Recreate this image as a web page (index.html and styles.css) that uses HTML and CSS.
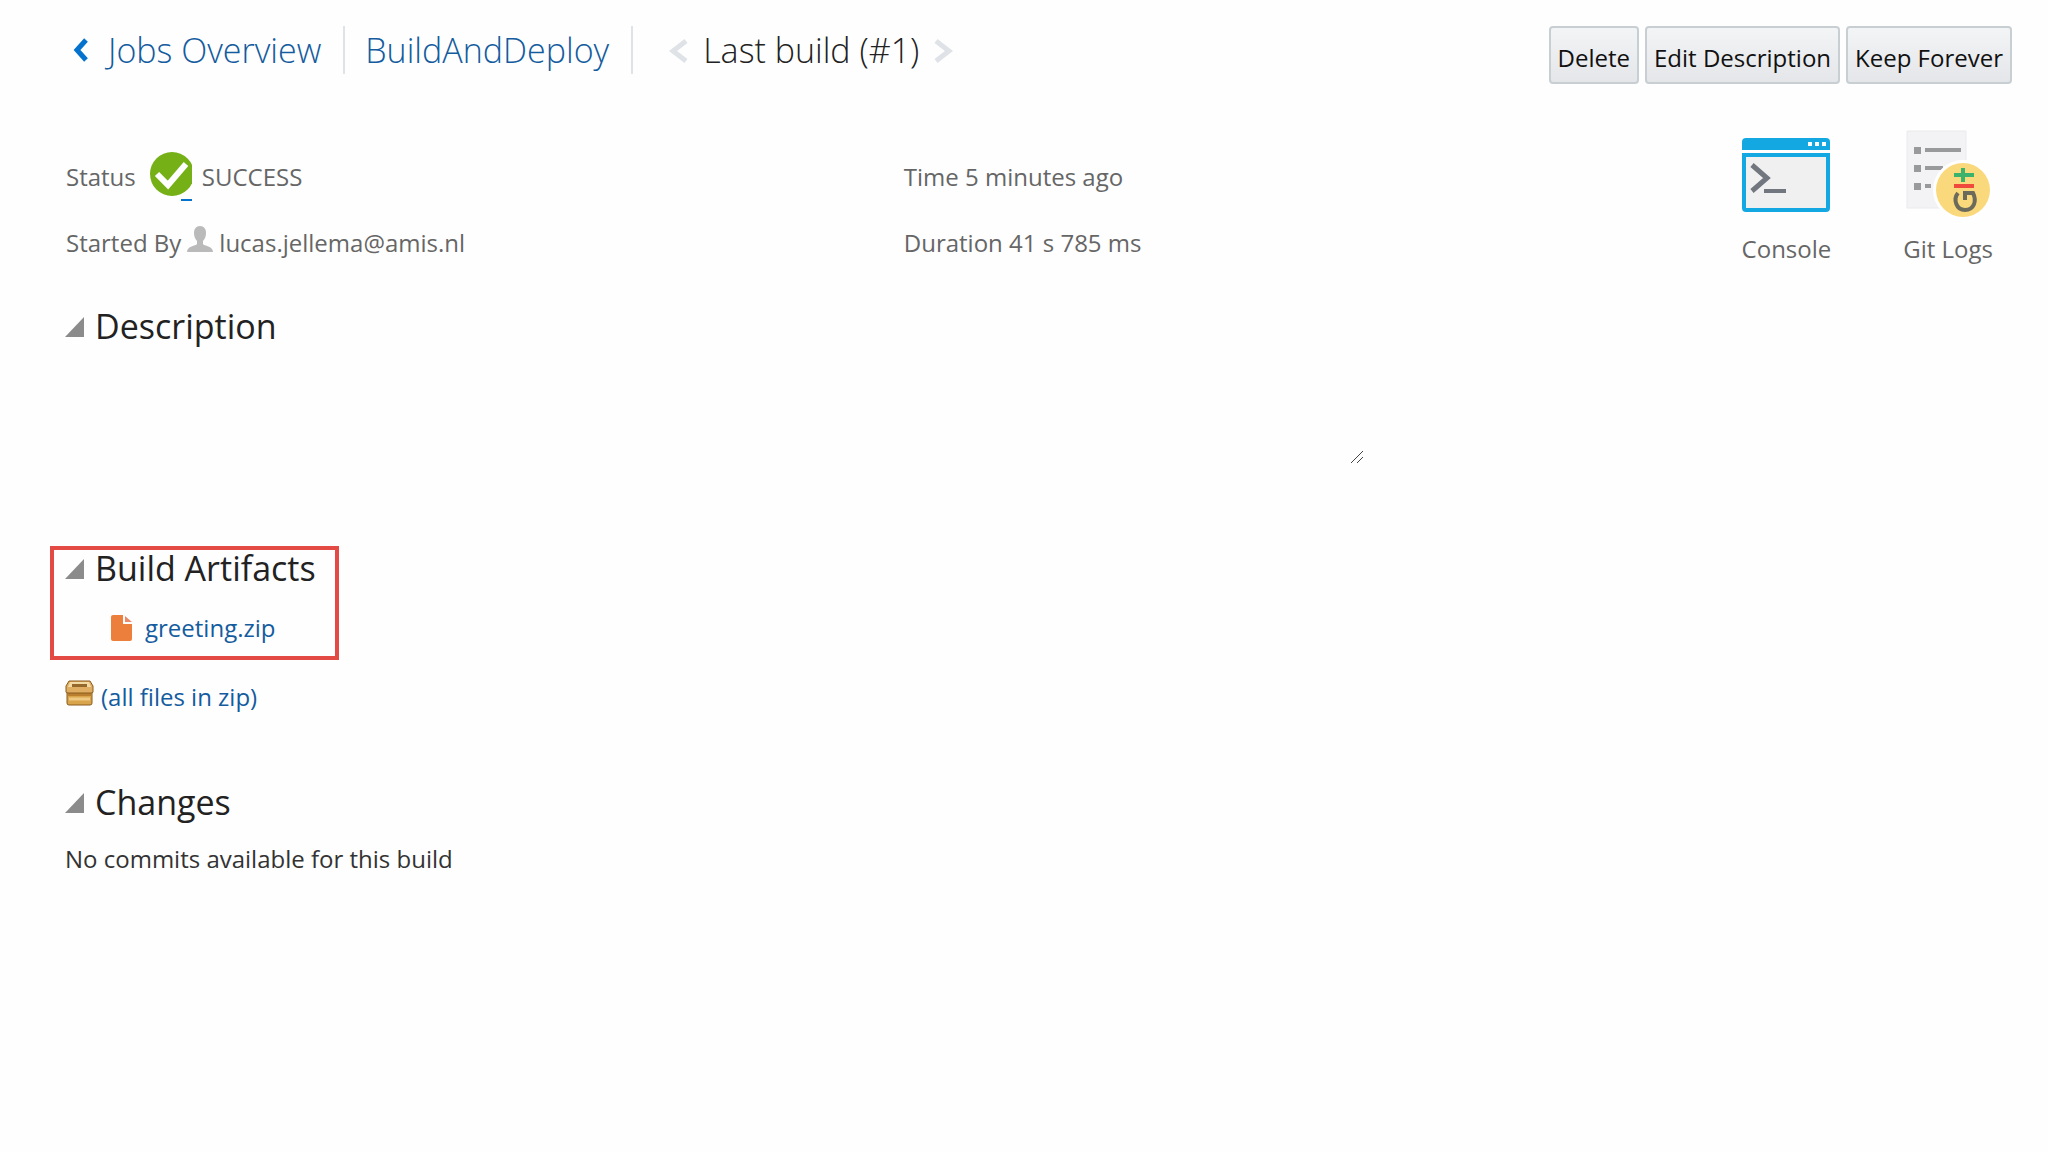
FILE: index.html
```html
<!DOCTYPE html>
<html lang="en">
<head>
    <meta charset="UTF-8">
    <meta name="viewport" content="width=device-width, initial-scale=1.0">
    <title>BuildAndDeploy - Last build (#1)</title>
    <link rel="stylesheet" href="styles.css">
</head>
<body>
    <header class="topbar">
        <nav class="breadcrumb">
            <a class="crumb crumb-back" href="#">
                <svg class="arrow" width="16" height="26" viewBox="0 0 16 26"><path d="M14 3L5 13l9 10" fill="none" stroke="#0572ce" stroke-width="5"/></svg>
                Jobs Overview
            </a>
            <a class="crumb" href="#">BuildAndDeploy</a>
            <span class="build">
                <button class="step" type="button" aria-label="Previous build">
                    <svg width="20" height="28" viewBox="0 0 20 28"><path d="M17 5L4 15l13 10" fill="none" stroke="#dfe3e7" stroke-width="5"/></svg>
                </button>
                <span class="build-name">Last build (#1)</span>
                <button class="step" type="button" aria-label="Next build">
                    <svg width="20" height="28" viewBox="0 0 20 28"><path d="M3 5l13 10L3 25" fill="none" stroke="#dfe3e7" stroke-width="5"/></svg>
                </button>
            </span>
        </nav>
        <div class="actions">
            <button class="btn" type="button">Delete</button>
            <button class="btn" type="button">Edit Description</button>
            <button class="btn" type="button">Keep Forever</button>
        </div>
    </header>

    <div class="summary">
        <div class="facts">
            <p class="fact">
                Status
                <svg class="status-icon" width="42" height="50" viewBox="0 0 42 50">
                    <circle cx="22" cy="22" r="22" fill="#74b016"/>
                    <path d="M7 22l11 11 18-21" fill="none" stroke="#fff" stroke-width="6"/>
                    <path d="M31 48h11" stroke="#0572ce" stroke-width="2"/>
                </svg>
                SUCCESS
            </p>
            <p class="fact">Time 5 minutes ago</p>
            <p class="fact">
                Started By
                <svg class="user-icon" width="26" height="26" viewBox="0 0 26 26"><path d="M13 0c4 0 6 3 6 7 0 3-1 6-3 8v3c1 2 10 2 10 8H0c0-6 9-6 10-8v-3C8 13 7 10 7 7c0-4 2-7 6-7z" fill="#bababa"/></svg>
                lucas.jellema@amis.nl
            </p>
            <p class="fact">Duration 41 s 785 ms</p>
        </div>
        <div class="tools">
            <a class="tool" href="#">
                <svg width="88" height="88" viewBox="0 0 88 88">
                    <path d="M0 20V12q0-4 4-4h80q4 0 4 4v8z" fill="#14a8e2"/>
                    <path d="M66 12h4v4h-4zM73 12h4v4h-4zM80 12h4v4h-4z" fill="#fff"/>
                    <path d="M2 25h84v53q0 2-2 2H4q-2 0-2-2z" fill="#f0f0f1" stroke="#14a8e2" stroke-width="4"/>
                    <path d="M10 35l15 13-15 13" fill="none" stroke="#72777f" stroke-width="5"/>
                    <path d="M22 61h22" stroke="#72777f" stroke-width="4"/>
                </svg>
                Console
            </a>
            <a class="tool" href="#">
                <svg width="88" height="88" viewBox="0 0 88 88">
                    <path d="M3 1h59v77H3z" fill="#f3f3f5" stroke="#eaeaed"/>
                    <path d="M10 17h7v7h-7zM10 35h7v7h-7zM10 53h7v7h-7z" fill="#999a9c"/>
                    <path d="M21 20h36M21 38h18M21 56h6" stroke="#999a9c" stroke-width="4"/>
                    <circle cx="59" cy="60" r="30" fill="#fff"/>
                    <circle cx="59" cy="60" r="27" fill="#fad87c"/>
                    <path d="M50 45h20M59 38v14" stroke="#3bb36c" stroke-width="4"/>
                    <path d="M50 56h20" stroke="#ef4a3c" stroke-width="4"/>
                    <path d="M54 63c-5 6-2 17 7 17s12-9 8-17h-8v7" fill="none" stroke="#6c6a5a" stroke-width="4"/>
                </svg>
                Git Logs
            </a>
        </div>
    </div>

    <main class="content">
        <details class="section" open>
            <summary class="section-title">
                <svg width="20" height="22" viewBox="0 0 20 22"><path d="M19 2v20H0z" fill="#8b8b8b"/></svg>
                Description
            </summary>
            <textarea class="description" aria-label="Description"></textarea>
        </details>

        <details class="section highlighted" open>
            <summary class="section-title">
                <svg width="20" height="22" viewBox="0 0 20 22"><path d="M19 2v20H0z" fill="#8b8b8b"/></svg>
                Build Artifacts
            </summary>
            <a class="artifact" href="#">
                <svg width="21" height="26" viewBox="0 0 21 26">
                    <path d="M2 0h10v9h9v15q0 2-2 2H2q-2 0-2-2V2q0-2 2-2z" fill="#ec7f3c"/>
                    <path d="M14 1l7 6h-7z" fill="#e98b6a"/>
                </svg>
                greeting.zip
            </a>
        </details>

        <a class="all-files" href="#">
            <svg class="box-icon" width="29" height="26" viewBox="0 0 29 26">
                <path d="M2 12h25v11q0 2-2 2H4q-2 0-2-2z" fill="#d9a54c" stroke="#8a5a1c"/>
                <path d="M3 13h23v3H3z" fill="#b97f2e"/>
                <path d="M4 1h21l3 5v6q0 1-2 1H3q-2 0-2-1V6z" fill="#e0ae62" stroke="#8a5a1c"/>
                <path d="M5 2h19l2 5H3z" fill="#f3d9a4"/>
                <path d="M7 4h15v3H7z" fill="#94692b"/>
                <path d="M4 19h21" stroke="#efc983" stroke-width="3"/>
            </svg>
            (all files in zip)
        </a>

        <details class="section" open>
            <summary class="section-title">
                <svg width="20" height="22" viewBox="0 0 20 22"><path d="M19 2v20H0z" fill="#8b8b8b"/></svg>
                Changes
            </summary>
            <p class="changes">No commits available for this build</p>
        </details>
    </main>
</body>
</html>
```
FILE: styles.css
```css
*{
    margin: 0;
    padding: 0;
    box-sizing: border-box;
}
body{
    background: #fefefe;
    color: #333;
    font-family: "Open Sans", "Noto Sans", sans-serif;
    font-size: 24px;
    line-height: 32px;
}
a{
    color: #145c9e;
    text-decoration: none;
}
svg{
    flex: none;
}

/* top bar */
.topbar{
    display: flex;
    justify-content: space-between;
    align-items: flex-start;
    padding: 26px 36px 0 72px;
}
.breadcrumb{
    display: flex;
    font-size: 34px;
    font-weight: 300;
    line-height: 48px;
}
.crumb{
    padding-right: 22px;
    margin-right: 20px;
    border-right: 2px solid #dfe3e7;
}
.crumb-back{
    display: flex;
    align-items: center;
    gap: 20px;
}
.build{
    display: flex;
    align-items: center;
    gap: 14px;
    margin-left: 16px;
    color: #222;
}
.step{
    display: flex;
    border: 0;
    background: none;
}
.actions{
    display: flex;
    gap: 6px;
}
.btn{
    height: 58px;
    padding: 4px 7px 0;
    border: 2px solid #c8cfd3;
    border-radius: 4px;
    background: linear-gradient(#f3f4f6, #e4e6e9);
    color: #111;
    font-family: inherit;
    font-size: 24px;
}

/* build facts */
.summary{
    display: flex;
    justify-content: space-between;
    padding: 46px 55px 0 66px;
    color: #666;
}
.facts{
    flex: 1;
    display: grid;
    grid-template-columns: 1fr 1fr;
    grid-auto-rows: 66px;
    align-content: start;
    padding-top: 14px;
}
.fact{
    display: flex;
    align-items: center;
}
.status-icon{
    margin: 0 10px 0 14px;
}
.user-icon{
    margin: 0 6px 8px 6px;
}
.tools{
    display: flex;
    gap: 72px;
}
.tool{
    display: flex;
    flex-direction: column;
    align-items: center;
    gap: 15px;
    color: #666;
}

/* sections */
.content{
    padding: 32px 50px;
}
.section{
    padding: 0 15px;
}
.section-title{
    display: flex;
    align-items: center;
    gap: 10px;
    color: #222;
    font-size: 34px;
    line-height: 36px;
    list-style: none;
    cursor: pointer;
}
.description{
    display: block;
    width: 1300px;
    max-width: 100%;
    height: 116px;
    margin: 4px 0 82px;
    border: 0;
    outline: 0;
    background: transparent;
    font: inherit;
    resize: both;
}
.description::-webkit-resizer{
    background: url("data:image/svg+xml,%3Csvg xmlns='http://www.w3.org/2000/svg' viewBox='0 0 15 15'%3E%3Cpath d='M1 14L13 2M7 14l6-6' stroke='%23444' stroke-width='1'/%3E%3C/svg%3E") no-repeat;
}
.highlighted{
    width: 289px;
    padding: 0 11px;
    border: 4px solid #e24a43;
}
.artifact{
    display: flex;
    align-items: center;
    gap: 13px;
    padding: 26px 0 12px 46px;
}
.all-files{
    display: flex;
    align-items: center;
    gap: 7px;
    padding: 20px 15px 70px;
}
.box-icon{
    margin-bottom: 8px;
}
.changes{
    padding-top: 23px;
}
```
